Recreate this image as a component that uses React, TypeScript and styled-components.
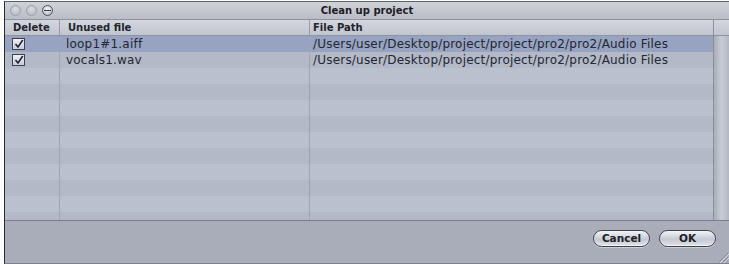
import React from 'react'
import styled, { createGlobalStyle } from 'styled-components'

const Global = createGlobalStyle`
  html, body { margin: 0; padding: 0; background: #ffffff; }
  body { font-family: "DejaVu Sans", "Liberation Sans", sans-serif; }
`

type FileRow = { name: string; path: string; checked: boolean }

const files: FileRow[] = [
  { name: 'loop1#1.aiff', path: '/Users/user/Desktop/project/project/pro2/pro2/Audio Files', checked: true },
  { name: 'vocals1.wav', path: '/Users/user/Desktop/project/project/pro2/pro2/Audio Files', checked: true },
]

const EMPTY_ROWS = 10

const App = () => {
  return (
    <>
      <Global />
      <Window>
        <TitleBar>
          <Lights>
            <Light />
            <Light />
            <Light $active />
          </Lights>
          <Title>Clean up project</Title>
        </TitleBar>
        <Body>
          <Table>
            <HeaderRow>
              <HeadCell $pad={8}>Delete</HeadCell>
              <HeadCell $pad={8}>Unused file</HeadCell>
              <HeadCell $pad={3} $last>File Path</HeadCell>
            </HeaderRow>
            <Rows>
              {files.map((f, i) => (
                <Row key={f.name} $selected={i === 0} $odd={i % 2 === 1}>
                  <Cell $pad={7}>
                    <CheckBox>
                      <svg width="10" height="10" viewBox="0 0 10 10">
                        <path d="M1.5 5 L4 8 L8.8 1" fill="none" stroke="#1d2433" strokeWidth="1.6" />
                      </svg>
                    </CheckBox>
                  </Cell>
                  <Cell $pad={6}>{f.name}</Cell>
                  <Cell $pad={3} $last>{f.path}</Cell>
                </Row>
              ))}
              {Array.from({ length: EMPTY_ROWS }).map((_, i) => (
                <Row key={i} $odd={(i + files.length) % 2 === 1}>
                  <Cell $pad={7} />
                  <Cell $pad={6} />
                  <Cell $pad={3} $last />
                </Row>
              ))}
            </Rows>
          </Table>
          <ScrollTrack>
            <ScrollHead />
          </ScrollTrack>
        </Body>
        <Footer>
          <Button>Cancel</Button>
          <Button>OK</Button>
          <Grip>
            <svg width="12" height="12" viewBox="0 0 12 12">
              <path d="M11 2 L2 11 M11 6 L6 11 M11 9 L9 11" stroke="#8a8e99" strokeWidth="1" />
              <path d="M12 3 L3 12 M12 7 L7 12" stroke="#d4d7de" strokeWidth="1" />
            </svg>
          </Grip>
        </Footer>
      </Window>
    </>
  )
}

export default App

const Window = styled.div`
  margin: 1px 0 0 4px;
  width: 725px;
  height: 263px;
  box-sizing: border-box;
  border-left: 1px solid #2a2c31;
  border-top: 1px solid #5e6068;
  border-bottom: 1px solid #7d808a;
  display: flex;
  flex-direction: column;
  background: #a9adb9;
  overflow: hidden;
`

const TitleBar = styled.div`
  height: 17px;
  flex-shrink: 0;
  position: relative;
  display: flex;
  align-items: center;
  justify-content: center;
  background: linear-gradient(#cfd2d9, #babdc6);
  border-bottom: 1px solid #8e929c;
`

const Lights = styled.div`
  position: absolute;
  left: 5px;
  top: 3px;
  display: flex;
  gap: 5px;
`

const Light = styled.div<{ $active?: boolean }>`
  width: 11px;
  height: 11px;
  border-radius: 50%;
  box-sizing: border-box;
  border: 1px solid ${p => (p.$active ? '#4f525a' : '#9a9ea8')};
  background: ${p => (p.$active ? 'radial-gradient(circle at 50% 35%, #f2f3f5, #aeb1b9)' : 'radial-gradient(circle at 50% 35%, #dadce1, #b4b7bf)')};
  position: relative;
  &::after {
    content: '';
    display: ${p => (p.$active ? 'block' : 'none')};
    position: absolute;
    left: 1px;
    right: 1px;
    top: 4px;
    height: 1px;
    background: #3c3f46;
  }
`

const Title = styled.div`
  font-size: 10px;
  font-weight: bold;
  color: #1e2026;
`

const Body = styled.div`
  display: flex;
  height: 200px;
  flex-shrink: 0;
  border-bottom: 1px solid #7b7f8a;
`

const Table = styled.div`
  flex: 1;
  display: flex;
  flex-direction: column;
  background: #b4bac8;
`

const columns = '55px 250px 1fr'

const HeaderRow = styled.div`
  display: grid;
  grid-template-columns: ${columns};
  height: 15px;
  flex-shrink: 0;
  background: linear-gradient(#d3d6dd, #c1c5cf);
  border-bottom: 1px solid #8f94a0;
`

const HeadCell = styled.div<{ $last?: boolean; $pad: number }>`
  font-size: 10px;
  font-weight: bold;
  color: #22252c;
  line-height: 15px;
  padding-left: ${p => p.$pad}px;
  border-right: ${p => (p.$last ? 'none' : '1px solid #979ba6')};
`

const Rows = styled.div`
  flex: 1;
  overflow: hidden;
`

const Row = styled.div<{ $selected?: boolean; $odd?: boolean }>`
  display: grid;
  grid-template-columns: ${columns};
  height: 16px;
  background: ${p => (p.$selected ? '#97a3c0' : p.$odd ? '#b3b9c7' : '#bac0cd')};
`

const Cell = styled.div<{ $last?: boolean; $pad: number }>`
  font-size: 12px;
  letter-spacing: 0.2px;
  color: #232733;
  line-height: 16px;
  padding-left: ${p => p.$pad}px;
  white-space: nowrap;
  display: flex;
  align-items: center;
  border-right: ${p => (p.$last ? 'none' : '1px solid #9fa4b0')};
`

const CheckBox = styled.div`
  width: 13px;
  height: 12px;
  box-sizing: border-box;
  border: 1px solid #3d4250;
  background: linear-gradient(#eef0f4, #c9cdd6);
  display: flex;
  align-items: center;
  justify-content: center;
`

const ScrollTrack = styled.div`
  width: 15px;
  border-left: 1px solid #8c909b;
  background: linear-gradient(90deg, #a9adb7, #c8ccd4 50%, #b3b7c1);
  display: flex;
  flex-direction: column;
`

const ScrollHead = styled.div`
  height: 15px;
  background: linear-gradient(#d3d6dd, #c1c5cf);
  border-bottom: 1px solid #8f94a0;
`

const Footer = styled.div`
  flex: 1;
  position: relative;
  display: flex;
  justify-content: flex-end;
  align-items: flex-start;
  gap: 9px;
  padding: 9px 13px 0 0;
  background: #a9adb9;
`

const Button = styled.button`
  width: 57px;
  height: 17px;
  border-radius: 9px;
  border: 1px solid #3e424b;
  background: linear-gradient(#f3f4f7, #c5c9d2 55%, #dfe2e8);
  box-shadow: inset 0 -1px 1px rgba(255, 255, 255, 0.7), 0 1px 0 rgba(255, 255, 255, 0.4);
  font-family: "DejaVu Sans", "Liberation Sans", sans-serif;
  font-size: 10.5px;
  font-weight: bold;
  color: #1d2027;
  padding: 0;
  line-height: 15px;
`

const Grip = styled.div`
  position: absolute;
  right: 0;
  bottom: 0;
  width: 12px;
  height: 12px;
  display: flex;
`
